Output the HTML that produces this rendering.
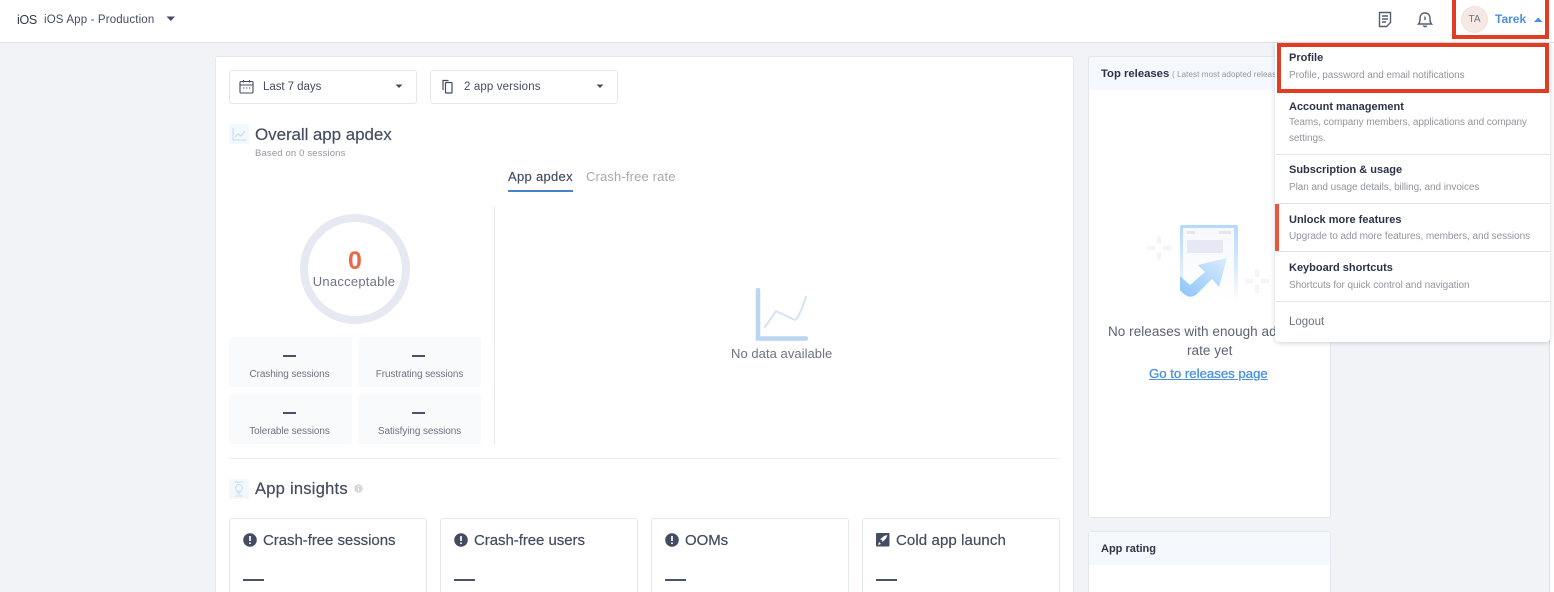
<!DOCTYPE html>
<html><head><meta charset="utf-8"><style>
html,body{margin:0;padding:0;width:1554px;height:592px;overflow:hidden}
body{background:#fff;font-family:"Liberation Sans",sans-serif;color:#434c60}
#w{position:absolute;left:0;top:0;width:1554px;height:592px;overflow:hidden;background:#fff;filter:blur(.3px)}
.a{position:absolute}
.t{position:absolute;white-space:nowrap;line-height:1}
.box{position:absolute;box-sizing:border-box;background:#fff;border:1px solid #e5e7ef;border-radius:3px}
.stat{position:absolute;width:123px;height:50px;background:#f9fafc;border-radius:3px}
.dash{position:absolute;height:2px;width:13px;background:#4a5368}
.mt{position:absolute;left:1289px;white-space:nowrap;font-size:11px;font-weight:bold;color:#2c3348;line-height:1}
.md{position:absolute;left:1289px;white-space:nowrap;font-size:10px;color:#92969f;line-height:1;letter-spacing:-.07px}
.hr{position:absolute;left:1276px;width:274px;height:1px;background:#e3e4e8}
.st{position:absolute;font-size:10px;color:#6d7382;white-space:nowrap;line-height:1;text-align:center;width:123px;letter-spacing:-.1px}
.ct{position:absolute;font-size:15px;color:#434c60;white-space:nowrap;line-height:1;letter-spacing:-.05px;-webkit-text-stroke:.2px #434c60}
</style></head><body><div id="w">
<div class="a" style="left:0;top:43px;width:1549px;height:549px;background:#f2f3f7"></div>
<div class="a" style="left:0;top:42px;width:1554px;height:1px;background:#dcdfe6"></div>
<div class="a" style="left:1549px;top:43px;width:1px;height:549px;background:#dcdfe6"></div>

<div class="t" style="left:17px;top:14px;font-size:12.5px;color:#30374a;letter-spacing:-.3px">iOS</div>
<div class="t" style="left:44px;top:15px;font-size:11.5px;color:#434c60;letter-spacing:.15px">iOS App - Production</div>
<svg class="a" style="left:166px;top:16px" width="10" height="6"><path d="M0.5 0.5H9L4.8 5z" fill="#434c60"/></svg>

<svg class="a" style="left:1378px;top:11px" width="14" height="17" fill="none" stroke="#555d6e" stroke-width="1.4"><path d="M1.5 1.5H12.5V11.5L8.5 15.500H1.5Z"/><path d="M4 5H10M4 8H10M4 11H8"/></svg>
<svg class="a" style="left:1417px;top:11px" width="16" height="17" fill="none" stroke="#555d6e" stroke-width="1.4"><path d="M1.5 13C3 11.5 3 10 3 7.5C3 4 5 2 8 2C11 2 13 4 13 7.5C13 10 13 11.5 14.5 13Z"/><path d="M8 5.5V9M6.5 14.5C7 16 9 16 9.5 14.5"/></svg>

<div class="a" style="left:1461px;top:6px;width:27px;height:27px;border-radius:50%;background:#f6e9e4;border:1px solid #eee3df;box-sizing:border-box"></div>
<div class="t" style="left:1461px;top:15px;width:27px;text-align:center;font-size:10px;color:#6d7382">TA</div>
<div class="t" style="left:1495px;top:13px;font-size:12px;font-weight:bold;color:#4a90e2;letter-spacing:0">Tarek</div>
<svg class="a" style="left:1534px;top:17px" width="9" height="5"><path d="M0 5H8.5L4.2 0.5z" fill="#4a90e2"/></svg>

<!-- main panel -->
<div class="box" style="left:215px;top:56px;width:859px;height:560px"></div>
<div class="box" style="left:229px;top:70px;width:188px;height:34px"></div>
<svg class="a" style="left:239px;top:79px" width="15" height="15" fill="none" stroke="#434c60" stroke-width="1.1"><rect x="1" y="2.5" width="13" height="11.5" rx="1"/><path d="M1 6H14M4.5 1V3.5M10.5 1V3.5"/><path d="M4 9H5.3M7 9H8.3M10 9H11.3" stroke-width="1"/></svg>
<div class="t" style="left:263px;top:82px;font-size:11.5px;color:#434c60;letter-spacing:-.05px">Last 7 days</div>
<svg class="a" style="left:395px;top:84px" width="8" height="5"><path d="M0.5 0.5H7.5L4 4z" fill="#434c60"/></svg>
<div class="box" style="left:430px;top:70px;width:188px;height:34px"></div>
<svg class="a" style="left:441px;top:79px" width="13" height="15" fill="none" stroke="#434c60" stroke-width="1.2"><path d="M2 11V1.5H7.5"/><rect x="4.5" y="3.5" width="6.5" height="10.5" rx=".8"/></svg>
<div class="t" style="left:464px;top:82px;font-size:11.5px;color:#434c60;letter-spacing:.13px">2 app versions</div>
<svg class="a" style="left:596px;top:84px" width="8" height="5"><path d="M0.5 0.5H7.5L4 4z" fill="#434c60"/></svg>

<div class="a" style="left:229px;top:124px;width:20px;height:20px;background:#f3f8fd"></div>
<svg class="a" style="left:231px;top:126px" width="16" height="16" fill="none" stroke="#c6dcf3" stroke-width="1.1"><path d="M2 2V14H15"/><path d="M4 11L7 8L10 10L14 5"/></svg>
<div class="t" style="left:255px;top:126px;font-size:17px;color:#434c60;letter-spacing:-.08px;-webkit-text-stroke:.15px #434c60">Overall app apdex</div>
<div class="t" style="left:255px;top:149px;font-size:9.5px;color:#92969f;letter-spacing:.15px">Based on 0 sessions</div>

<div class="t" style="left:508px;top:170px;font-size:13px;color:#434c60;letter-spacing:.3px;-webkit-text-stroke:.15px #434c60">App apdex</div>
<div class="a" style="left:508px;top:190px;width:65px;height:2px;background:#4a80c8"></div>
<div class="t" style="left:586px;top:170px;font-size:13px;color:#a5a9b2;letter-spacing:.15px">Crash-free rate</div>
<div class="a" style="left:494px;top:206px;width:1px;height:238px;background:#e8e9ee"></div>

<div class="a" style="left:300px;top:214px;width:110px;height:110px;border-radius:50%;border:8px solid #e6e9f2;box-sizing:border-box"></div>
<div class="t" style="left:300px;top:249px;width:110px;text-align:center;font-size:25px;font-weight:bold;color:#e8694a">0</div>
<div class="t" style="left:299px;top:275px;width:110px;text-align:center;font-size:13px;color:#6d7382;letter-spacing:.25px">Unacceptable</div>

<div class="stat" style="left:229px;top:337px"></div><div class="stat" style="left:358px;top:337px"></div>
<div class="stat" style="left:229px;top:394px"></div><div class="stat" style="left:358px;top:394px"></div>
<div class="dash" style="left:283px;top:355px"></div><div class="dash" style="left:412px;top:355px"></div>
<div class="dash" style="left:283px;top:412px"></div><div class="dash" style="left:412px;top:412px"></div>
<div class="st" style="left:228px;top:370px">Crashing sessions</div>
<div class="st" style="left:358px;top:370px">Frustrating sessions</div>
<div class="st" style="left:228px;top:427px">Tolerable sessions</div>
<div class="st" style="left:358px;top:427px">Satisfying sessions</div>

<svg class="a" style="left:755px;top:288px" width="54" height="54" fill="none"><path d="M3 2V50.500H51" stroke="#bcd6f2" stroke-width="4.5" stroke-linecap="round"/><path d="M10 39L21 23L40 32Q44 30 51 9" stroke="#d3e4f6" stroke-width="2" stroke-linecap="round" stroke-linejoin="round"/></svg>
<div class="t" style="left:731px;top:347px;font-size:13px;color:#6d7382;letter-spacing:.05px">No data available</div>

<div class="a" style="left:229px;top:458px;width:831px;height:1px;background:#eeeff4"></div>
<div class="a" style="left:229px;top:479px;width:20px;height:20px;background:#f3f8fd"></div>
<svg class="a" style="left:232px;top:480px" width="14" height="18" fill="none" stroke="#c6dcf3" stroke-width="1"><path d="M3 2H11M3 16H11"/><circle cx="7" cy="8" r="3.5"/><path d="M5 11L7 14L9 11"/></svg>
<div class="t" style="left:255px;top:481px;font-size:16.5px;color:#434c60;letter-spacing:.25px;-webkit-text-stroke:.2px #434c60">App insights</div>
<svg class="a" style="left:354px;top:484px" width="9" height="9"><circle cx="4.500" cy="4.500" r="4.300" fill="#d5d7dc"/><path d="M4.500 2V3M4.500 4V7" stroke="#fff" stroke-width="1"/></svg>

<div class="box" style="left:229px;top:518px;width:198px;height:90px"></div>
<div class="box" style="left:440px;top:518px;width:198px;height:90px"></div>
<div class="box" style="left:651px;top:518px;width:198px;height:90px"></div>
<div class="box" style="left:862px;top:518px;width:198px;height:90px"></div>
<svg class="a" style="left:243px;top:533px" width="14" height="14"><circle cx="7" cy="7" r="6.8" fill="#434c60"/><path d="M7 3V8M7 9.5V11" stroke="#fff" stroke-width="1.7"/></svg>
<svg class="a" style="left:454px;top:533px" width="14" height="14"><circle cx="7" cy="7" r="6.8" fill="#434c60"/><path d="M7 3V8M7 9.5V11" stroke="#fff" stroke-width="1.7"/></svg>
<svg class="a" style="left:665px;top:533px" width="14" height="14"><circle cx="7" cy="7" r="6.8" fill="#434c60"/><path d="M7 3V8M7 9.5V11" stroke="#fff" stroke-width="1.7"/></svg>
<svg class="a" style="left:876px;top:533px" width="14" height="14"><rect width="13.5" height="13.5" rx="1" fill="#434c60"/><path d="M11.500 2L8 3L4 6.500L6 7L6.500 9L10 5.500ZM3 9L2 12L5 11Z" fill="#fff"/></svg>
<div class="ct" style="left:263px;top:533px">Crash-free sessions</div>
<div class="ct" style="left:474px;top:533px">Crash-free users</div>
<div class="ct" style="left:685px;top:533px">OOMs</div>
<div class="ct" style="left:896px;top:533px;letter-spacing:.1px">Cold app launch</div>
<div class="dash" style="left:243px;top:579px;width:21px"></div>
<div class="dash" style="left:454px;top:579px;width:21px"></div>
<div class="dash" style="left:665px;top:579px;width:21px"></div>
<div class="dash" style="left:876px;top:579px;width:21px"></div>

<!-- right column -->
<div class="box" style="left:1088px;top:56px;width:243px;height:462px;overflow:hidden"><div style="height:33px;background:#f5f9fe"></div></div>
<div class="t" style="left:1101px;top:69px;font-size:11.3px;font-weight:bold;color:#2c3348">Top releases</div>
<div class="t" style="left:1172px;top:71px;font-size:8px;color:#92969f;letter-spacing:.1px">( Latest most adopted releases</div>

<svg class="a" style="left:1145px;top:222px" width="130" height="82">
<defs><linearGradient id="g" x1="0" y1="0" x2="0" y2="1"><stop offset="0" stop-color="#b5d8fb"/><stop offset=".5" stop-color="#d6e9fd"/><stop offset="1" stop-color="#fff"/></linearGradient>
<linearGradient id="p" x1="0" y1="0" x2="0" y2="1"><stop offset="0" stop-color="#f6f8fc"/><stop offset="1" stop-color="#fff"/></linearGradient>
<linearGradient id="h" x1="0" y1="1" x2="1" y2="0"><stop offset="0" stop-color="#8cc4f8"/><stop offset="1" stop-color="#dbecfd"/></linearGradient></defs>
<path d="M2 26H10M18 26H26M14 14V22M14 30V38M100 59H108M116 59H124M112 47V55M112 63V71" stroke="#f4f5f8" stroke-width="4.500" fill="none"/>
<path d="M35 5Q35 3 37 3H91Q93 3 93 5V80H35Z" fill="url(#g)"/>
<rect x="38" y="6" width="51" height="74" fill="url(#p)"/>
<rect x="42" y="9" width="8" height="3" fill="#e3e6ef"/><rect x="74" y="9" width="12" height="3" fill="#e3e6ef"/>
<rect x="42" y="18" width="36" height="13" rx="1" fill="#e6e9f3"/>
<path d="M82 36L53 43L60 50L45 63L35 54V68Q44 79 52 72L67 57L74 65Z" fill="url(#h)"/>
</svg>
<div class="t" style="left:1108px;top:325px;font-size:13.5px;color:#5b6273;letter-spacing:.05px">No releases with enough adoption</div>
<div class="t" style="left:1187px;top:344px;font-size:13.5px;color:#5b6273;letter-spacing:.05px">rate yet</div>
<div class="t" style="left:1149px;top:367px;font-size:13.2px;color:#4a90e2;text-decoration:underline;-webkit-text-stroke:.3px #4a90e2">Go to releases page</div>

<div class="box" style="left:1088px;top:531px;width:243px;height:80px;overflow:hidden"><div style="height:33px;background:#f5f9fe"></div></div>
<div class="t" style="left:1101px;top:544px;font-size:11px;font-weight:bold;color:#2c3348">App rating</div>

<!-- dropdown -->
<div class="a" style="left:1275px;top:43px;width:275px;height:299px;background:#fff;border-radius:0 0 4px 4px;box-shadow:0 1px 5px rgba(40,50,80,.22)"></div>
<div class="mt" style="top:53px">Profile</div>
<div class="md" style="top:71px">Profile, password and email notifications</div>
<div class="mt" style="top:102px">Account management</div>
<div class="md" style="top:118px">Teams, company members, applications and company</div>
<div class="md" style="top:134px">settings.</div>
<div class="hr" style="top:154px"></div>
<div class="mt" style="top:165px">Subscription &amp; usage</div>
<div class="md" style="top:183px">Plan and usage details, billing, and invoices</div>
<div class="hr" style="top:203px"></div>
<div class="a" style="left:1275px;top:204px;width:4px;height:47px;background:#e8573a"></div>
<div class="mt" style="top:215px">Unlock more features</div>
<div class="md" style="top:232px">Upgrade to add more features, members, and sessions</div>
<div class="hr" style="top:251px"></div>
<div class="mt" style="top:263px">Keyboard shortcuts</div>
<div class="md" style="top:281px">Shortcuts for quick control and navigation</div>
<div class="hr" style="top:301px"></div>
<div class="t" style="left:1289px;top:317px;font-size:11.5px;color:#6d7382">Logout</div>

<!-- highlights -->
<div class="a" style="left:1452px;top:-4px;width:97px;height:43px;box-sizing:border-box;border:4px solid #e23d22"></div>
<div class="a" style="left:1277px;top:43px;width:272px;height:50px;box-sizing:border-box;border:4px solid #e23d22"></div>
</div></body></html>
